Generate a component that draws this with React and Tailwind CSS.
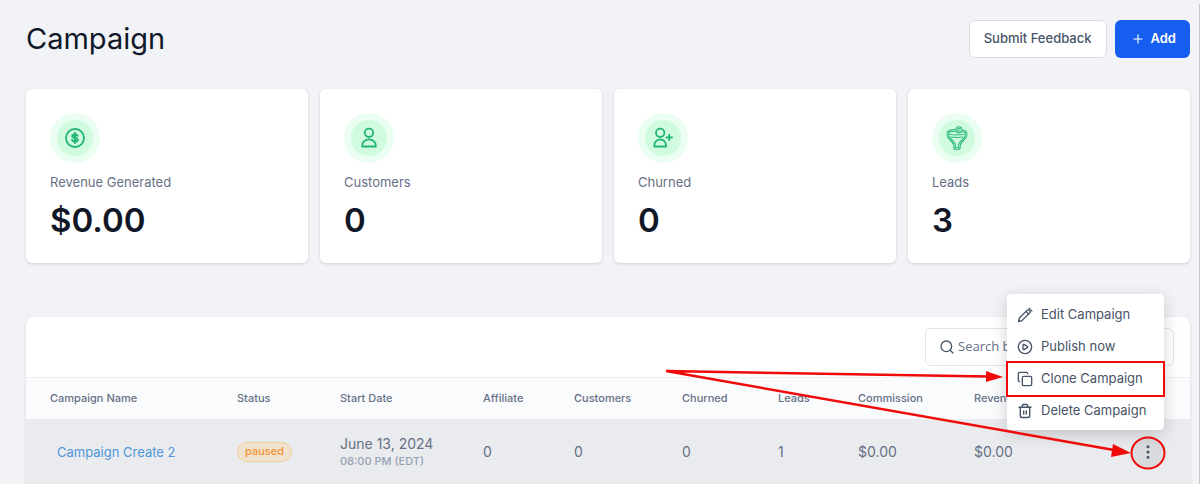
import React from 'react';
import { CirclePlay, Copy, EllipsisVertical, Plus, Search } from 'lucide-react';

const DollarIcon = () => (
  <svg width="24" height="24" viewBox="0 0 24 24" fill="none" stroke="#22b573" strokeLinecap="round" strokeLinejoin="round">
    <circle cx="12" cy="12" r="9" strokeWidth="1.800" />
    <path d="M14.600 9.900c-.3-.9-1.300-1.400-2.600-1.400-1.500 0-2.700.6-2.700 1.800 0 2.500 5.500.9 5.500 3.400 0 1.200-1.200 1.800-2.800 1.800-1.500 0-2.600-.6-2.900-1.600" strokeWidth="2" />
    <path d="M12 7v10" strokeWidth="2" />
  </svg>
);

const UserIcon = () => (
  <svg width="24" height="24" viewBox="0 0 24 24" fill="none" stroke="#22b573" strokeWidth="1.800" strokeLinejoin="round">
    <circle cx="12" cy="6.800" r="4.200" />
    <path d="M5.200 20.500v-.8c0-3.600 3-6.300 6.800-6.300s6.800 2.700 6.800 6.300v.8z" />
  </svg>
);

const UserPlusIcon = () => (
  <svg width="24" height="24" viewBox="0 0 24 24" fill="none" stroke="#22b573" strokeWidth="1.800" strokeLinejoin="round">
    <circle cx="9.200" cy="6.800" r="4.200" />
    <path d="M3.300 20.500v-.8c0-3.600 2.600-6.300 5.900-6.300s5.900 2.700 5.900 6.300v.8z" />
    <path d="M18.200 8v7M14.700 11.500h7" strokeWidth="1.800" />
  </svg>
);

const FunnelIcon = () => (
  <svg width="24" height="24" viewBox="0 0 24 24" fill="none" strokeLinecap="round" strokeLinejoin="round">
    <g stroke="#22b573" strokeWidth="2.600">
      <path d="M10.800 4.400C6.500 4.300 3 5.400 3 7.200v2.600c0 2.400 5.800 5.200 6.600 9.200v2.200c0 .9.500 1.300 1.200 1.300h2.400c.7 0 1.200-.4 1.200-1.300V19c.8-4 6.600-6.800 6.600-9.200V7.200c0-1.200-1.800-2-4.300-2.400" />
      <circle cx="13.800" cy="3.800" r="2.300" />
    </g>
    <g stroke="#b5f5d0" strokeWidth=".8">
      <path d="M10.800 4.400C6.500 4.300 3 5.400 3 7.200v2.600c0 2.400 5.800 5.200 6.600 9.200v2.200c0 .9.500 1.300 1.200 1.300h2.400c.7 0 1.200-.4 1.200-1.300V19c.8-4 6.600-6.800 6.600-9.200V7.200c0-1.200-1.800-2-4.300-2.400" />
      <circle cx="13.800" cy="3.800" r="2.300" />
    </g>
    <path d="M4.500 8.200c2.500 1 12.500 1 15 0M6.500 11c3 .7 8 .7 11 0" stroke="#22b573" strokeWidth="1" />
  </svg>
);

const PencilIcon = () => (
  <svg width="16" height="16" viewBox="0 0 16 16" fill="none" stroke="#475467" strokeWidth="1.300" strokeLinecap="round" strokeLinejoin="round">
    <path d="M1.500 14.500l.9-3.500 7.600-7.600a1.400 1.400 0 0 1 2 0l.6.6a1.400 1.400 0 0 1 0 2l-7.600 7.600z" />
    <path d="M9 4.400l2.600 2.600M11.900 1.100l3 3" />
  </svg>
);

const TrashIcon = () => (
  <svg width="16" height="16" viewBox="0 0 16 16" fill="none" stroke="#475467" strokeWidth="1.400" strokeLinecap="round" strokeLinejoin="round">
    <path d="M2 4.300h12M5.300 4.300V2.700c0-.7.500-1.200 1.200-1.200h3c.7 0 1.200.5 1.200 1.200v1.600" />
    <path d="M3.300 4.300v8.400c0 1 .8 1.800 1.800 1.800h5.800c1 0 1.800-.8 1.800-1.800V4.300M6.700 8v3M9.300 8v3" />
  </svg>
);

const stats = [
  { label: 'Revenue Generated', value: '$0.00', icon: DollarIcon },
  { label: 'Customers', value: '0', icon: UserIcon },
  { label: 'Churned', value: '0', icon: UserPlusIcon },
  { label: 'Leads', value: '3', icon: FunnelIcon },
];

const columns = [
  { label: 'Campaign Name', width: 'w-[187px]' },
  { label: 'Status', width: 'w-[103px]' },
  { label: 'Start Date', width: 'w-[143px]' },
  { label: 'Affiliate', width: 'w-[91px]' },
  { label: 'Customers', width: 'w-[108px]' },
  { label: 'Churned', width: 'w-[96px]' },
  { label: 'Leads', width: 'w-[80px]' },
  { label: 'Commission', width: 'w-[116px]' },
  { label: 'Revenue', width: 'w-[156px]' },
];

const campaigns = [
  {
    name: 'Campaign Create 2',
    status: 'paused',
    date: 'June 13, 2024',
    time: '08:00 PM (EDT)',
    values: ['0', '0', '0', '1', '$0.00', '$0.00'],
  },
];

const actions = [
  { label: 'Edit Campaign', icon: PencilIcon },
  { label: 'Publish now', icon: () => <CirclePlay size={16} color="#475467" /> },
  { label: 'Clone Campaign', icon: () => <Copy size={16} color="#475467" />, highlighted: true },
  { label: 'Delete Campaign', icon: TrashIcon },
];

const StatCard = ({ label, value, icon: Icon }) => (
  <div className="rounded-md bg-white px-6 pt-6 pb-[19px] shadow-[0_1px_3px_rgba(16,24,40,0.16)]">
    <div className="flex size-[50px] items-center justify-center rounded-full bg-[#eafef1]">
      <div className="flex size-9 items-center justify-center rounded-full bg-[#d0fbde]">
        <Icon />
      </div>
    </div>
    <p className="mt-[9px] text-[13px] leading-5 text-[#667085]">{label}</p>
    <p className="mt-1 text-[33px] leading-12 font-semibold text-[#101828]">{value}</p>
  </div>
);

const ActionMenu = () => (
  <div role="menu" className="absolute -top-[23px] right-[26px] w-[157px] rounded bg-white pt-[5px] pb-[3px] shadow-[0_4px_16px_rgba(0,0,0,0.18)]">
    {actions.map(({ label, icon: Icon, highlighted }) => (
      <button key={label} role="menuitem" className="relative flex h-8 w-full items-center gap-2 pl-[10px] text-[13px] whitespace-nowrap text-[#475467]">
        <Icon />
        {label}
        {highlighted && <span className="absolute -inset-x-px -inset-y-[2px] border-2 border-[#f00a0a]" />}
      </button>
    ))}
  </div>
);

// Arrows pointing at the clone entry and the row's menu button
const Pointers = () => (
  <svg className="pointer-events-none absolute top-12 right-0" width="530" height="110" viewBox="660 365 530 110" fill="none" stroke="#f00a0a" strokeWidth="2.500">
    <path d="M666 371L988 376.500M666 371L1114 450" />
    <path d="M986 371l17 6-17 5zM1113 444l18 9-20 4z" fill="#f00a0a" stroke="none" />
    <ellipse cx="1148" cy="453" rx="16.500" ry="15.500" strokeWidth="2" />
  </svg>
);

const CampaignTable = () => (
  <table className="w-full table-fixed text-left">
    <thead>
      <tr className="h-[41px] border-t border-[#eef0f3] bg-[#fafbfd] text-[11px] text-[#667085]">
        {columns.map((c) => (
          <th key={c.label} className={`${c.width} pl-6 font-medium`}>{c.label}</th>
        ))}
        <th aria-label="Actions" />
      </tr>
    </thead>
    <tbody>
      {campaigns.map((c) => (
        <tr key={c.name} className="h-[66px] bg-[#e9ebef] text-sm text-[#667085]">
          <td className="pl-[31px]">
            <a href="#" className="text-[13px] text-[#5096d8]">{c.name}</a>
          </td>
          <td className="pl-6">
            <span className="inline-flex h-5 items-center rounded-full border border-[#f5cf96] bg-[#efe2cf] px-[7px] align-middle text-[11px] font-medium text-[#f79433]">{c.status}</span>
          </td>
          <td className="pl-6">
            <p className="leading-[18px]">{c.date}</p>
            <p className="text-[11px] leading-4 font-medium text-[#98a2b3]">{c.time}</p>
          </td>
          {c.values.map((v, i) => (
            <td key={i} className="pl-6">{v}</td>
          ))}
          <td className="pl-[26px]">
            <button aria-label="Open row menu" className="flex size-8 items-center justify-center rounded-full bg-[#d9dbdf]">
              <EllipsisVertical size={18} color="#475467" />
            </button>
          </td>
        </tr>
      ))}
    </tbody>
  </table>
);

export default function App() {
  return (
    <div className="h-screen overflow-hidden bg-[#f1f3f7] pt-1 font-['Inter',sans-serif]">
      <main className="min-h-full border-r border-[#c4c7cc] pt-4 pr-[9px] pl-[26px]">
        <header className="flex h-[38px] items-center justify-between">
          <h1 className="text-[29px] leading-9 text-[#101828]">Campaign</h1>
          <div className="flex gap-2">
            <button className="h-[38px] rounded-md border border-[#d9dce2] bg-white px-[14px] text-[13px] font-medium text-[#475467]">
              Submit Feedback
            </button>
            <button className="flex h-[38px] items-center gap-[6px] rounded-md bg-[#155eef] pr-[14px] pl-4 text-[13px] font-semibold text-white">
              <Plus size={14} strokeWidth={2} />
              Add
            </button>
          </div>
        </header>

        <section className="mt-[31px] grid grid-cols-4 gap-3">
          {stats.map((s) => (
            <StatCard key={s.label} {...s} />
          ))}
        </section>

        <section className="relative mt-[54px]">
          <div className="overflow-hidden rounded-t-lg bg-white shadow-[0_1px_3px_rgba(16,24,40,0.16)]">
            <div className="flex h-[60px] items-center justify-end pr-4">
              <label className="flex h-[38px] w-[249px] items-center gap-[3px] rounded-md border border-[#e1e4e9] px-[13px] text-[#475467]">
                <Search size={16} />
                <input
                  type="search"
                  aria-label="Search campaigns"
                  placeholder="Search by name"
                  className="min-w-0 flex-1 font-['Open_Sans',sans-serif] text-[13px] outline-none placeholder:text-[#667085]"
                />
              </label>
            </div>
            <CampaignTable />
          </div>
          <ActionMenu />
          <Pointers />
        </section>
      </main>
    </div>
  );
}
